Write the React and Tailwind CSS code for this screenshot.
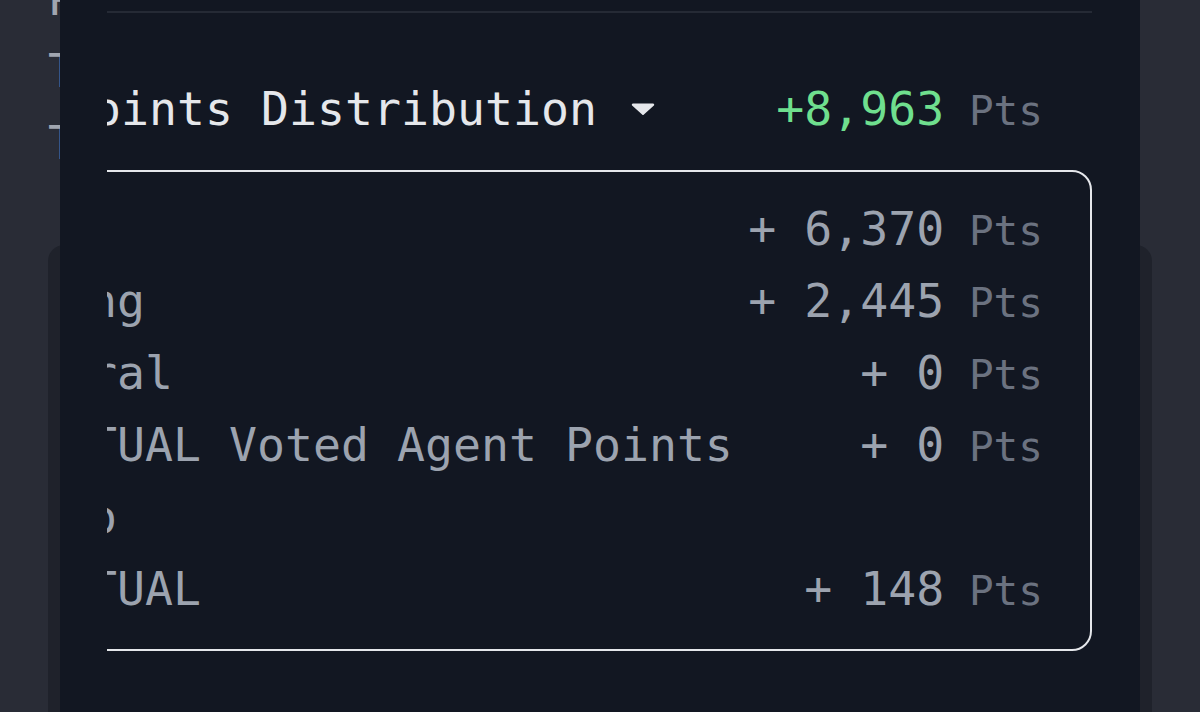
import React from "react";

const mono = { fontFamily: '"DejaVu Sans Mono", "Liberation Mono", monospace' };

const rows = [
  { label: ["Trade"], value: "6,370" },
  { label: ["Staking"], value: "2,445" },
  { label: ["Referral"], value: "0" },
  { label: ["veVIRTUAL Voted Agent Points", "Studio"], value: "0" },
  { label: ["veVIRTUAL"], value: "148" },
];

const Caret = () => (
  <svg width="24" height="14" viewBox="0 0 24 14" className="ml-[34px] shrink-0">
    <path d="M2 1.5 H22 a1.2 1.2 0 0 1 0.9 2 L12.9 12.6 a1.2 1.2 0 0 1 -1.8 0 L1.1 3.5 a1.2 1.2 0 0 1 0.9 -2 Z" fill="#e5e7eb" />
  </svg>
);

const App = () => {
  return (
    <div className="relative w-[1200px] h-[712px] overflow-hidden bg-[#292c36]" style={mono}>
      {/* page behind the sheet */}
      <div className="pl-[48px] -mt-[37px] text-[46.5px] leading-[72px] text-[#a1a6b0]">
        <div>Pts</div>
        <div>Total</div>
        <div>Tier</div>
      </div>
      <div className="mx-[48px] mt-[66px] h-[600px] rounded-t-[16px] bg-[#1f222b]" />

      {/* points sheet */}
      <div className="absolute top-0 bottom-0 left-[60px] w-[1080px] bg-[#121722] pl-[47px] pr-[48px]">
        <div className="h-full overflow-hidden">
          <div className="-ml-[213px]">
            <div className="mt-[11px] h-[2px] bg-[#252a35]" />

            <div className="mt-[60px] flex h-[72px] items-baseline justify-between pl-[171px] pr-[49px] text-[46.5px] leading-[72px]">
              <div className="flex items-center text-[#e5e7eb] whitespace-nowrap">
                <span>Points Distribution</span>
                <Caret />
              </div>
              <div className="whitespace-nowrap">
                <span className="text-[#6fdf8e]">+8,963</span>
                <span className="text-[41px] leading-none text-[#6b7280]"> Pts</span>
              </div>
            </div>

            <div className="mt-[25px] rounded-[20px] border-2 border-[#e5e7eb] pt-[21px] pb-[24px] pl-[53px] pr-[47px] text-[46.5px] leading-[72px]">
              {rows.map((r) => (
                <div key={r.label[0]} className="flex items-baseline justify-between whitespace-nowrap">
                  <div className="text-[#9ca3af]">
                    {r.label.map((l) => (
                      <div key={l}>{l}</div>
                    ))}
                  </div>
                  <div className="h-[72px]">
                    <span className="text-[#9ca3af]">+ {r.value}</span>
                    <span className="text-[41px] leading-none text-[#6b7280]"> Pts</span>
                  </div>
                </div>
              ))}
            </div>
          </div>
        </div>
      </div>
    </div>
  );
};

export default App;
